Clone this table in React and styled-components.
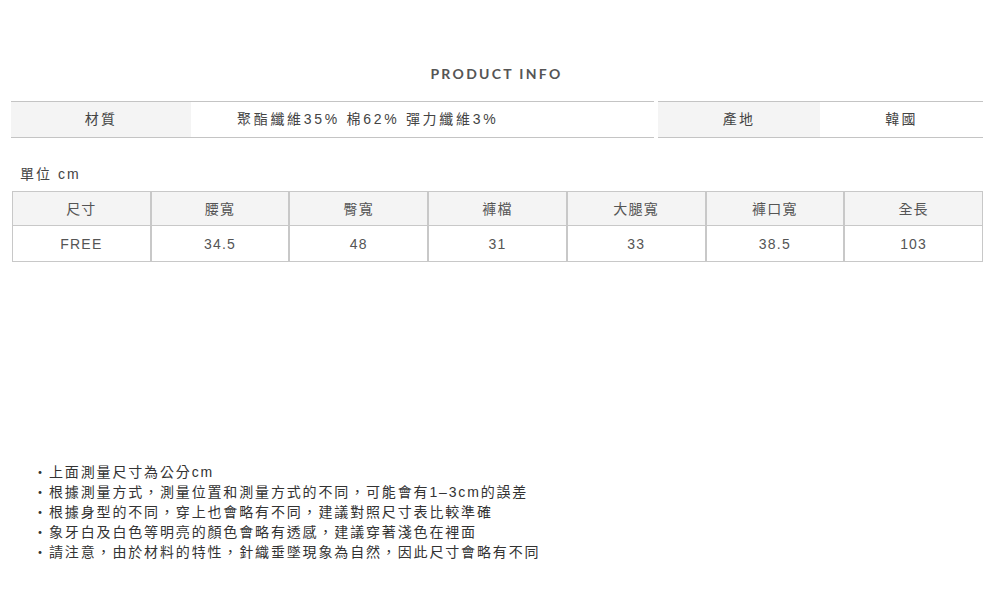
import styled, { createGlobalStyle } from 'styled-components';

const GlobalStyle = createGlobalStyle`
  html, body {
    margin: 0;
    padding: 0;
    background: #fff;
  }
  body {
    font-family: "Liberation Sans", "Noto Sans CJK TC", sans-serif;
    color: #333;
  }
`;

const Page = styled.div`
  width: 993px;
  padding: 64px 0 0;
  box-sizing: border-box;
`;

const Title = styled.h2`
  margin: 0 0 17px;
  text-align: center;
  font-family: Lato, "Liberation Sans", sans-serif;
  font-weight: 700;
  font-size: 14px;
  letter-spacing: 2.3px;
  color: #555;
  line-height: 20px;
`;

const InfoRow = styled.div`
  display: flex;
  gap: 4px;
  padding: 0 10px 0 11px;
`;

const InfoTable = styled.div`
  display: flex;
  flex: ${(p) => p.$grow};
  height: 37px;
  border-top: 1px solid #c4c4c4;
  border-bottom: 1px solid #c4c4c4;
  box-sizing: border-box;
`;

const InfoCell = styled.div`
  display: flex;
  align-items: center;
  justify-content: ${(p) => (p.$left ? 'flex-start' : 'center')};
  padding-left: ${(p) => (p.$left ? '46px' : '0')};
  padding-bottom: 3px;
  box-sizing: border-box;
  width: ${(p) => p.$w || 'auto'};
  flex: ${(p) => (p.$w ? 'none' : '1')};
  background: ${(p) => (p.$head ? '#f4f4f4' : '#fff')};
  font-size: 14px;
  color: #444;
  letter-spacing: ${(p) => (p.$left ? '2.7px' : '2.2px')};
`;

const Unit = styled.div`
  margin: 28px 0 0 20px;
  font-size: 14px;
  color: #444;
  line-height: 16px;
  letter-spacing: 2px;
`;

const SizeTable = styled.table`
  margin: 9px 0 0 12px;
  width: 971px;
  border-collapse: separate;
  border-spacing: 0;
  table-layout: fixed;
`;

const Cell = styled.td`
  box-sizing: border-box;
  height: ${(p) => (p.$head ? '35px' : '36px')};
  padding: 0 0 ${(p) => (p.$head ? '2px' : '0')};
  text-align: center;
  font-size: 14px;
  color: #555;
  letter-spacing: 1.2px;
  background: ${(p) => (p.$head ? '#f4f4f4' : '#fff')};
  border-left: 1px solid #c8c8c8;
  border-right: 1px solid #c8c8c8;
  border-top: ${(p) => (p.$head ? '1px solid #c8c8c8' : 'none')};
  border-bottom: 1px solid #c8c8c8;
`;

const Notes = styled.ul`
  list-style: none;
  margin: 200px 0 0;
  padding: 0 0 0 33px;
`;

const Note = styled.li`
  font-size: 14px;
  line-height: 20px;
  color: #333;
  letter-spacing: 1.85px;
  &::before {
    content: '・';
    display: inline-block;
    width: 16px;
    letter-spacing: 0;
  }
`;

const heads = ['尺寸', '腰寬', '臀寬', '褲檔', '大腿寬', '褲口寬', '全長'];
const values = ['FREE', '34.5', '48', '31', '33', '38.5', '103'];

const notes = [
  '上面測量尺寸為公分cm',
  '根據測量方式，測量位置和測量方式的不同，可能會有1–3cm的誤差',
  '根據身型的不同，穿上也會略有不同，建議對照尺寸表比較準確',
  '象牙白及白色等明亮的顏色會略有透感，建議穿著淺色在裡面',
  '請注意，由於材料的特性，針織垂墜現象為自然，因此尺寸會略有不同',
];

const App = () => (
  <Page>
    <GlobalStyle />
    <Title>PRODUCT INFO</Title>
    <InfoRow>
      <InfoTable $grow="0 0 643px">
        <InfoCell $head $w="180px">材質</InfoCell>
        <InfoCell $left>聚酯纖維35% 棉62% 彈力纖維3%</InfoCell>
      </InfoTable>
      <InfoTable $grow="1">
        <InfoCell $head $w="162px">產地</InfoCell>
        <InfoCell>韓國</InfoCell>
      </InfoTable>
    </InfoRow>
    <Unit>單位 cm</Unit>
    <SizeTable>
      <tbody>
        <tr>
          {heads.map((h) => (
            <Cell key={h} $head>{h}</Cell>
          ))}
        </tr>
        <tr>
          {values.map((v, i) => (
            <Cell key={i}>{v}</Cell>
          ))}
        </tr>
      </tbody>
    </SizeTable>
    <Notes>
      {notes.map((n) => (
        <Note key={n}>{n}</Note>
      ))}
    </Notes>
  </Page>
);

export default App;
